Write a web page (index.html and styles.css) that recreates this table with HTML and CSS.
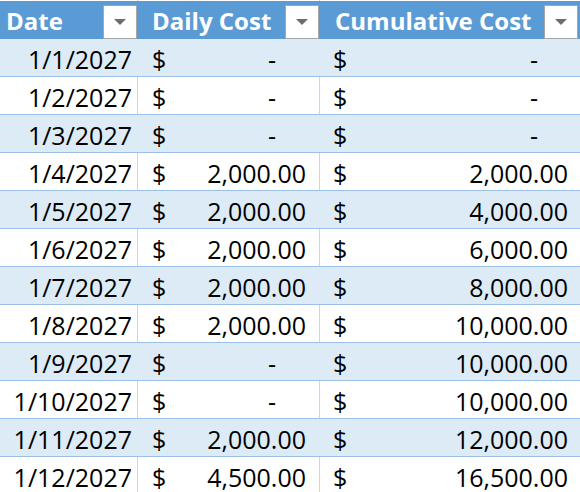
FILE: index.html
```html
<!DOCTYPE html>
<html>
<head>
<meta charset="utf-8">
<link rel="stylesheet" href="styles.css">
</head>
<body>
<div class="sheet">
  <div class="toprow"><span class="tc c1"></span><span class="tc c2"></span><span class="tc c3"></span></div>
  <div class="row head">
    <div class="cell c1 hc"><span class="ht">Date</span><span class="filter"><span class="tri"></span></span></div>
    <div class="cell c2 hc"><span class="ht">Daily Cost</span><span class="filter"><span class="tri"></span></span></div>
    <div class="cell c3 hc"><span class="ht">Cumulative Cost</span><span class="filter"><span class="tri"></span></span></div>
  </div>

  <div class="row band"><div class="cell c1 date">1/1/2027</div><div class="cell c2 money"><span>$</span><span class="dash">-</span></div><div class="cell c3 money"><span>$</span><span class="dash">-</span></div></div>
  <div class="row"><div class="cell c1 date">1/2/2027</div><div class="cell c2 money"><span>$</span><span class="dash">-</span></div><div class="cell c3 money"><span>$</span><span class="dash">-</span></div></div>
  <div class="row band"><div class="cell c1 date">1/3/2027</div><div class="cell c2 money"><span>$</span><span class="dash">-</span></div><div class="cell c3 money"><span>$</span><span class="dash">-</span></div></div>
  <div class="row"><div class="cell c1 date">1/4/2027</div><div class="cell c2 money"><span>$</span><span>2,000.00</span></div><div class="cell c3 money"><span>$</span><span>2,000.00</span></div></div>
  <div class="row band"><div class="cell c1 date">1/5/2027</div><div class="cell c2 money"><span>$</span><span>2,000.00</span></div><div class="cell c3 money"><span>$</span><span>4,000.00</span></div></div>
  <div class="row"><div class="cell c1 date">1/6/2027</div><div class="cell c2 money"><span>$</span><span>2,000.00</span></div><div class="cell c3 money"><span>$</span><span>6,000.00</span></div></div>
  <div class="row band"><div class="cell c1 date">1/7/2027</div><div class="cell c2 money"><span>$</span><span>2,000.00</span></div><div class="cell c3 money"><span>$</span><span>8,000.00</span></div></div>
  <div class="row"><div class="cell c1 date">1/8/2027</div><div class="cell c2 money"><span>$</span><span>2,000.00</span></div><div class="cell c3 money"><span>$</span><span>10,000.00</span></div></div>
  <div class="row band"><div class="cell c1 date">1/9/2027</div><div class="cell c2 money"><span>$</span><span class="dash">-</span></div><div class="cell c3 money"><span>$</span><span>10,000.00</span></div></div>
  <div class="row"><div class="cell c1 date">1/10/2027</div><div class="cell c2 money"><span>$</span><span class="dash">-</span></div><div class="cell c3 money"><span>$</span><span>10,000.00</span></div></div>
  <div class="row band"><div class="cell c1 date">1/11/2027</div><div class="cell c2 money"><span>$</span><span>2,000.00</span></div><div class="cell c3 money"><span>$</span><span>12,000.00</span></div></div>
  <div class="row"><div class="cell c1 date">1/12/2027</div><div class="cell c2 money"><span>$</span><span>4,500.00</span></div><div class="cell c3 money"><span>$</span><span>16,500.00</span></div></div>
</div>
</body>
</html>
```

FILE: styles.css
```css
html, body {
  margin: 0;
  padding: 0;
  background: #ffffff;
  overflow: hidden;
}

.sheet {
  width: 580px;
  font-family: "Open Sans", "Liberation Sans", sans-serif;
  font-size: 25px;
  color: #000000;
}

.toprow {
  display: grid;
  grid-template-columns: 138px 182px 260px;
  height: 1px;
}

.tc {
  border-right: 1px solid #d4d4d4;
}

.tc.c3 {
  border-right: none;
}

.row {
  display: grid;
  grid-template-columns: 138px 182px 260px;
  height: 38px;
  box-sizing: border-box;
  border-bottom: 1px solid #9bc2e6;
  background: #ffffff;
}

.row.band {
  background: #ddebf7;
}

.cell {
  box-sizing: border-box;
  border-right: 1px solid #d4d4d4;
  display: flex;
  align-items: flex-end;
  line-height: 28px;
  padding-bottom: 3px;
  white-space: nowrap;
}

.band .cell {
  border-right-color: #ddebf7;
}

.cell.c3 {
  border-right: none;
}

.date {
  justify-content: flex-end;
  padding-right: 5px;
}

.money {
  justify-content: space-between;
}

.money.c2 {
  padding-left: 14px;
  padding-right: 13px;
}

.money.c3 {
  padding-left: 13px;
  padding-right: 12px;
}

.dash {
  padding-right: 30px;
}

.row.head {
  background: #5b9bd5;
  border-bottom: none;
  height: 38px;
}

.head .cell {
  border-right: none;
  align-items: center;
  justify-content: space-between;
  padding-bottom: 0;
}

.hc.c1 {
  padding-left: 6px;
}

.hc.c2 {
  padding-left: 14px;
}

.hc.c3 {
  padding-left: 15px;
  padding-right: 1px;
}

.ht {
  color: #ffffff;
  font-weight: 700;
  font-size: 24px;
  line-height: 34px;
  padding-top: 2px;
}

.filter {
  width: 34px;
  height: 34px;
  box-sizing: border-box;
  background: #ffffff;
  border: 1px solid #a6a6a6;
  display: flex;
  align-items: center;
  justify-content: center;
  margin-top: 3px;
  margin-right: 1px;
}

.tri {
  width: 0;
  height: 0;
  border-left: 6px solid transparent;
  border-right: 6px solid transparent;
  border-top: 6px solid #6d6d6d;
  margin-top: 1px;
}
```
